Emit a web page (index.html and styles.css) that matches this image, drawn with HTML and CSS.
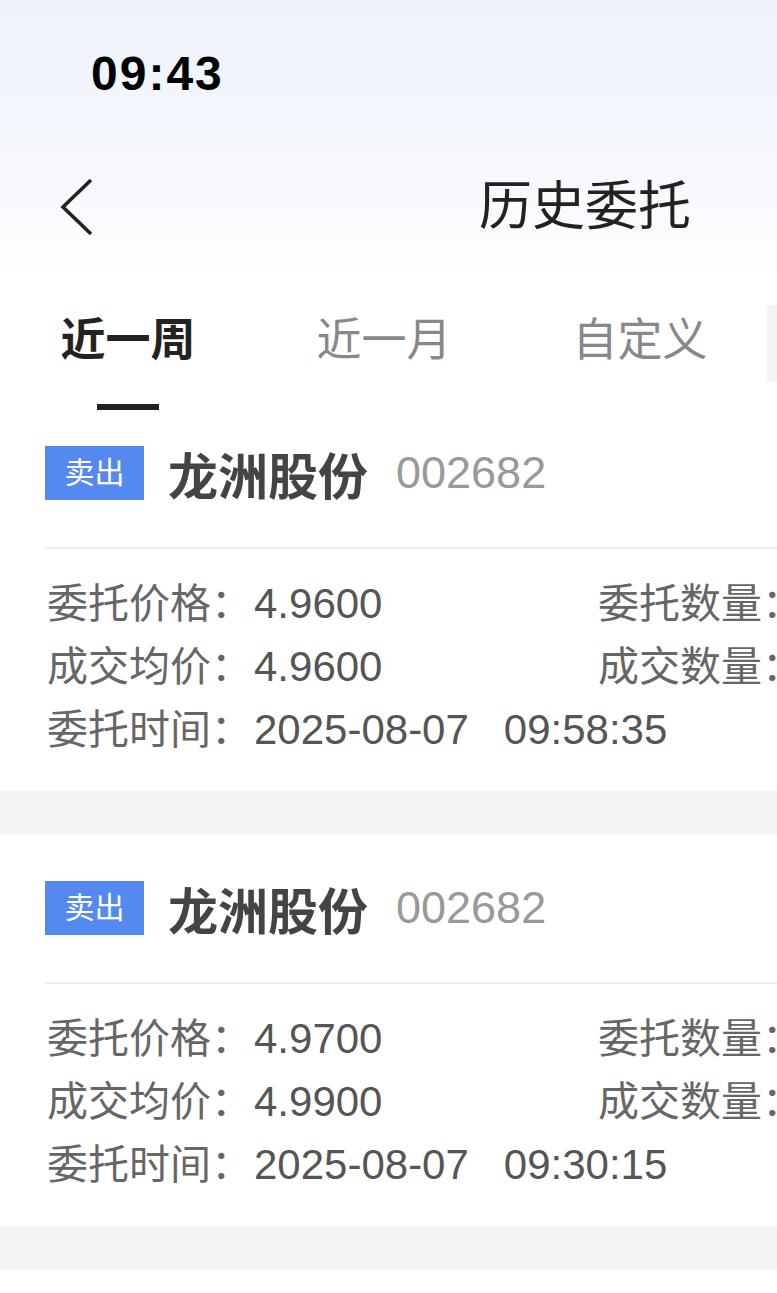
FILE: index.html
```html
<!DOCTYPE html>
<html>
  <head>
    <meta http-equiv="Content-Type" content="text/html; charset=utf-8">
    <link rel="stylesheet" href="styles.css">
  </head>
  <body>
    <div class="screen">
      <div class="top">
        <div class="status"><span class="time">09:43</span></div>
        <div class="nav">
          <svg class="back" width="40" height="60" viewBox="0 0 40 60"><path d="M33 3 L5 30 L33 57" fill="none" stroke="#222" stroke-width="3.6"/></svg>
          <h1 class="title">历史委托</h1>
          <span></span>
        </div>
      </div>

      <div class="tabs">
        <div class="tab on">近一周</div>
        <div class="tab">近一月</div>
        <div class="tab">自定义</div>
        <div class="tab-more"></div>
      </div>

      <div class="card">
        <div class="head"><span class="tag">卖出</span><span class="name">龙洲股份</span><span class="code">002682</span></div>
        <div class="line"></div>
        <div class="rows">
          <div><span class="k">委托价格：</span><span class="v">4.9600</span></div>
          <div><span class="k">委托数量：</span><span class="v">1000</span></div>
          <div><span class="k">成交均价：</span><span class="v">4.9600</span></div>
          <div><span class="k">成交数量：</span><span class="v">1000</span></div>
          <div class="wide"><span class="k">委托时间：</span><span class="v">2025-08-07&nbsp;&nbsp;&nbsp;09:58:35</span></div>
        </div>
      </div>
      <div class="gap"></div>

      <div class="card">
        <div class="head"><span class="tag">卖出</span><span class="name">龙洲股份</span><span class="code">002682</span></div>
        <div class="line"></div>
        <div class="rows">
          <div><span class="k">委托价格：</span><span class="v">4.9700</span></div>
          <div><span class="k">委托数量：</span><span class="v">1000</span></div>
          <div><span class="k">成交均价：</span><span class="v">4.9900</span></div>
          <div><span class="k">成交数量：</span><span class="v">1000</span></div>
          <div class="wide"><span class="k">委托时间：</span><span class="v">2025-08-07&nbsp;&nbsp;&nbsp;09:30:15</span></div>
        </div>
      </div>
      <div class="gap"></div>
    </div>
  </body>
</html>
```

FILE: styles.css
```css
html, body { margin: 0; padding: 0; background: #fff; overflow: hidden; }
body { font-family: "Liberation Sans", "Noto Sans CJK SC", sans-serif; }
.screen { width: 1170px; }

/* header with the soft blue fade */
.top { background: linear-gradient(#edf2fc, #f6f8fd 170px, #fff 280px); }
.status { height: 140px; padding-left: 91px; box-sizing: border-box; }
.time { display: block; padding-top: 50px; font-size: 48px; line-height: 48px; font-weight: bold; color: #000; letter-spacing: 2px; }
.nav { height: 134px; display: grid; grid-template-columns: 1fr auto 1fr; align-items: center; }
.back { margin-left: 58px; display: block; }
.title { margin: 0; font-size: 53px; font-weight: normal; color: #222; line-height: 60px; }

/* tabs */
.tabs { height: 126px; display: flex; background: #fff; }
.tab { width: 256px; box-sizing: border-box; padding-top: 37px; line-height: 60px; font-size: 45px; color: #888; text-align: center; position: relative; }
.tab.on { color: #222; font-weight: bold; }
.tab.on::after { content: ""; position: absolute; left: 97px; top: 130px; width: 62px; height: 6px; background: #222; }
.tab-more { width: 80px; height: 77px; margin: 31px 0 0 -1px; background: #f4f4f4; }

/* order cards */
.card { padding: 46px 0 0 45px; background: #fff; }
.head { height: 54px; display: flex; align-items: center; margin-bottom: 47px; }
.tag { width: 99px; height: 54px; line-height: 54px; text-align: center; background: #5589f2; color: #fff; font-size: 30px; }
.name { margin-left: 24px; font-size: 50px; font-weight: bold; color: #444; }
.code { margin-left: 28px; font-size: 45px; color: #999; }
.line { height: 2px; background: #efefef; }
.rows { display: grid; grid-template-columns: 551px auto; padding: 23px 0 30px 2px; font-size: 41px; line-height: 63px; white-space: nowrap; }
.rows > div { height: 63px; }
.rows .wide { grid-column: 1 / 3; }
.k { color: #666; }
.v { color: #555; margin-left: 2px; font-size: 42px; }
.gap { height: 44px; background: #f4f4f4; }
```
